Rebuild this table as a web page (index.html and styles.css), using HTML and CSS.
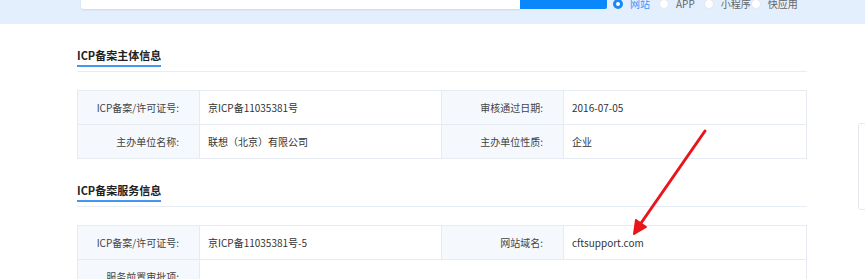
FILE: index.html
```html
<!DOCTYPE html>
<html lang="zh-CN">

<head>
  <meta charset="UTF-8">
  <meta name="viewport" content="width=device-width, initial-scale=1.0">
  <title>ICP备案查询</title>
  <link rel="stylesheet" href="styles.css">
</head>

<body>
  <div class="search-band">
    <div class="search-row">
      <div class="search-input"></div>
      <button class="search-btn"></button>
      <div class="radios">
        <label class="radio checked"><span class="dot"></span>网站</label>
        <label class="radio"><span class="dot"></span>APP</label>
        <label class="radio"><span class="dot"></span>小程序</label>
        <label class="radio"><span class="dot"></span>快应用</label>
      </div>
    </div>
  </div>

  <div class="content">
    <div class="section">
      <div class="section-title"><h3>ICP备案主体信息</h3></div>
      <table class="info">
        <colgroup>
          <col class="c-label"><col class="c-value"><col class="c-label"><col>
        </colgroup>
        <tr>
          <th>ICP备案/许可证号:</th>
          <td>京ICP备11035381号</td>
          <th>审核通过日期:</th>
          <td>2016-07-05</td>
        </tr>
        <tr>
          <th>主办单位名称:</th>
          <td>联想（北京）有限公司</td>
          <th>主办单位性质:</th>
          <td>企业</td>
        </tr>
      </table>
    </div>

    <div class="section">
      <div class="section-title"><h3>ICP备案服务信息</h3></div>
      <table class="info">
        <colgroup>
          <col class="c-label"><col class="c-value"><col class="c-label"><col>
        </colgroup>
        <tr>
          <th>ICP备案/许可证号:</th>
          <td>京ICP备11035381号-5</td>
          <th>网站域名:</th>
          <td>cftsupport.com</td>
        </tr>
        <tr>
          <th>服务前置审批项:</th>
          <td colspan="3"></td>
        </tr>
      </table>
    </div>
  </div>

  <!-- side widget, partly out of view -->
  <div class="side-box"></div>

  <!-- red pointer onto the domain -->
  <svg class="mark" width="865" height="279" viewBox="0 0 865 279">
    <line x1="705" y1="131" x2="639" y2="226" stroke="#e8161b" stroke-width="3" stroke-linecap="round" />
    <polygon points="634,234 636,220 646,227" fill="#e8161b" stroke="#e8161b" stroke-width="2" stroke-linejoin="round" />
  </svg>
</body>

</html>
```

FILE: styles.css
```css
* {
  box-sizing: border-box;
  font-family: "Microsoft YaHei", "Noto Sans CJK SC", "Noto Sans", sans-serif;
}

body {
  margin: 0;
  background: #fff;
  color: #333;
  font-size: 10px;
  overflow: hidden;
}

/* top search band */
.search-band {
  height: 24px;
  background: #e3effd;
  overflow: hidden;
}

.search-row {
  display: flex;
  align-items: center;
  margin-top: -27px;
  padding-left: 81px;
  height: 36px;
}

.search-input {
  width: 439px;
  height: 36px;
  background: #fff;
  box-shadow: 0 1px 2px rgba(80, 110, 150, 0.18);
  border-radius: 3px 0 0 3px;
}

.search-btn {
  width: 87px;
  height: 36px;
  border: none;
  background: #0a87fb;
  border-radius: 0 2px 2px 0;
}

.radios {
  display: flex;
  align-items: center;
  margin-left: 6px;
  padding-top: 26px;
}

.radio {
  display: flex;
  align-items: center;
  gap: 7px;
  color: #666;
  font-size: 10px;
  line-height: 14px;
  margin-right: 9px;
}

.radio:nth-child(3) {
  margin-right: 0;
}

.radio .dot {
  width: 10px;
  height: 10px;
  border-radius: 50%;
  background: #fff;
  border: 1px solid #e2e8ef;
}

.radio.checked {
  color: #3f95f6;
}

.radio.checked .dot {
  border: 3px solid #1b88f5;
  background: #fff;
}

/* info sections */
.content {
  width: 730px;
  margin-left: 77px;
}

.section {
  padding-top: 21px;
}

.section-title {
  padding-bottom: 4px;
  border-bottom: 1px solid #e6edf5;
}

.section-title h3 {
  display: inline-block;
  margin: 0;
  font-size: 11px;
  font-weight: bold;
  line-height: 20px;
  color: #222;
  border-bottom: 2px solid #4596f0;
}

table.info {
  width: 100%;
  margin-top: 18px;
  border-collapse: collapse;
  table-layout: fixed;
}

table.info col.c-label {
  width: 122px;
}

table.info col.c-value {
  width: 242px;
}

table.info th,
table.info td {
  height: 34px;
  border: 1px solid #e6ebf1;
  font-size: 10px;
  font-weight: normal;
  line-height: 14px;
  padding: 0 8px;
  text-align: left;
  color: #333;
}

table.info th {
  background: #f5f9fe;
  text-align: right;
  padding-right: 20px;
  color: #444;
}

.side-box {
  position: fixed;
  top: 123px;
  left: 858px;
  width: 60px;
  height: 87px;
  border: 1px solid #e4e8ee;
  border-radius: 3px;
  background: #fff;
}

.mark {
  position: absolute;
  left: 0;
  top: 0;
  pointer-events: none;
}
```
